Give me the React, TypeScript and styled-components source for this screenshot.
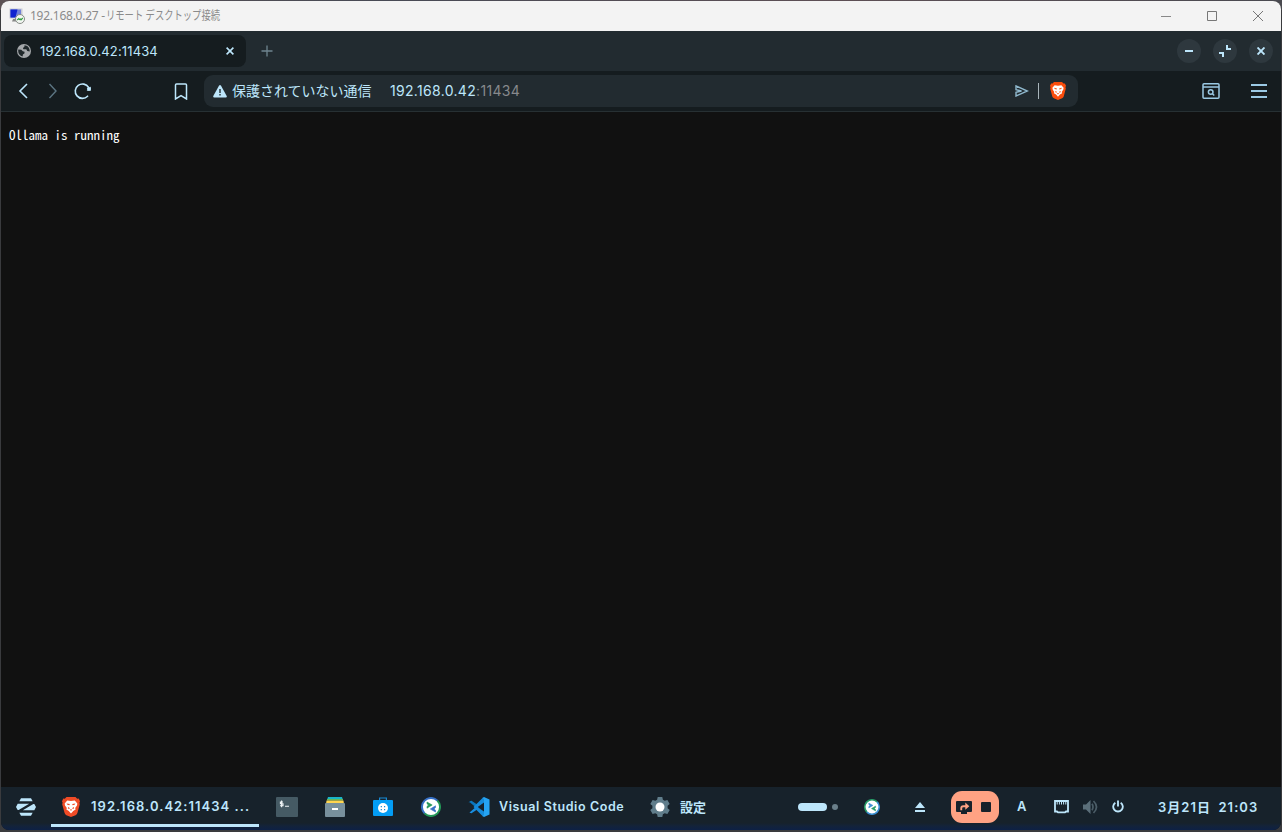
import React from "react";
import styled, { createGlobalStyle } from "styled-components";

const Global = createGlobalStyle`
  * { box-sizing: border-box; }
  html, body { margin: 0; background: #3a3b3e; }
  svg { display: block; flex: none; }
`;

const ACCENT = "#bde6fb";

const Desktop = styled.div`
  width: 1282px;
  height: 832px;
  padding: 1px 1px 2px;
  overflow: hidden;
  background: linear-gradient(90deg, #5c5254, #474a55 30%, #5d4f55 65%, #4a4a50);
  background-color: #3a3b3e;
  background-size: 100% 10px;
  background-repeat: no-repeat;
  font-family: Inter, "Noto Sans CJK JP", sans-serif;
`;

const RemoteWindow = styled.div`
  display: flex;
  flex-direction: column;
  height: 829px;
  border-radius: 8px;
  overflow: hidden;
  background: #111;
`;

const TitleBar = styled.header`
  display: flex;
  align-items: center;
  height: 30px;
  flex: none;
  padding-left: 8px;
  background: #f3f3f3;
`;

const Label = styled.span<{ $size: number; $color?: string; $ml?: number; $w?: number; $ls?: number; $width?: number }>`
  flex: none;
  white-space: pre;
  font-size: ${(p) => p.$size}px;
  line-height: 20px;
  color: ${(p) => p.$color ?? ACCENT};
  margin-left: ${(p) => p.$ml ?? 0}px;
  font-weight: ${(p) => p.$w ?? 400};
  letter-spacing: ${(p) => p.$ls ?? 0}px;
  width: ${(p) => (p.$width ? `${p.$width}px` : "auto")};
`;

const WindowTitle = styled(Label)`
  font-family: "Noto Sans", "Noto Sans CJK JP", sans-serif;
`;

const TaskLabel = styled(Label)`
  margin-top: -1px;
`;

const Clock = styled(Label)`
  word-spacing: 3px;
`;

const Kana = styled.span`
  display: inline-block;
  transform: scaleX(0.775);
  transform-origin: 0 50%;
`;

const Spacer = styled.div`
  flex: 1;
`;

const CaptionButton = styled.div`
  display: grid;
  place-items: center;
  width: 46px;
  height: 28px;
`;

const TabStrip = styled.div`
  display: flex;
  align-items: center;
  height: 40px;
  flex: none;
  padding: 0 8px 0 3px;
  background: #222b30;
`;

const Tab = styled.div`
  display: flex;
  align-items: center;
  width: 242px;
  height: 32px;
  padding: 0 12px 0 13px;
  border-radius: 8px;
  background: #151c1f;
`;

const NewTab = styled.div`
  margin-left: 15px;
`;

const RoundButton = styled.div`
  display: grid;
  place-items: center;
  width: 24px;
  height: 24px;
  margin-left: 12px;
  border-radius: 50%;
  background: #2e383e;
`;

const Toolbar = styled.div`
  display: flex;
  align-items: center;
  height: 41px;
  flex: none;
  padding-left: 14px;
  border-bottom: 1px solid #273033;
  background: #151c1f;
`;

const ToolIcon = styled.div<{ $ml?: number }>`
  margin-left: ${(p) => p.$ml ?? 0}px;
`;

const AddressBar = styled.div`
  display: flex;
  align-items: center;
  width: 874px;
  height: 32px;
  margin-left: 16px;
  padding: 0 12px 0 9px;
  border-radius: 9px;
  background: #222b30;
`;

const Divider = styled.div`
  width: 1px;
  height: 16px;
  margin: 0 11px 0 9px;
  background: #a9b5bb;
`;

const Page = styled.main`
  flex: 1;
  padding: 13px 8px;
  background: #111;
`;

const PageText = styled.pre`
  margin: 0;
  font: 13px/20px "Noto Sans Mono CJK JP", "DejaVu Sans Mono", monospace;
  color: #fff;
`;

const Taskbar = styled.footer`
  display: flex;
  align-items: stretch;
  height: 43px;
  flex: none;
  padding-bottom: 3px;
  background: linear-gradient(180deg, #17222b 0 36px, #13233a 39px, #0d2145 43px);
`;

const Slot = styled.div<{ $ml?: number; $w: number; $active?: boolean }>`
  display: flex;
  align-items: center;
  flex: none;
  width: ${(p) => p.$w}px;
  height: 40px;
  margin-left: ${(p) => p.$ml ?? 0}px;
  border-bottom: 3px solid ${(p) => (p.$active ? ACCENT : "transparent")};
  padding-top: 2px;
`;

const Workspace = styled.div<{ $w: number; $h: number; $on?: boolean }>`
  width: ${(p) => p.$w}px;
  height: ${(p) => p.$h}px;
  margin-right: 5px;
  border-radius: 4px;
  background: ${(p) => (p.$on ? ACCENT : "#6a7f8a")};
`;

const Recorder = styled.div`
  display: flex;
  align-items: center;
  flex: none;
  gap: 9px;
  width: 48px;
  height: 32px;
  margin: 4px 0 0 24px;
  padding-left: 5px;
  border-radius: 11px;
  background: #ffa283;
`;

const StopSquare = styled.div`
  width: 10px;
  height: 10px;
  border-radius: 1px;
  background: #17222b;
`;

const RemoteIcon = () => (
  <svg width="16" height="16" viewBox="0 0 16 16">
    <path d="M.5.5h13v10H.5z" fill="#c9cbd6" />
    <path d="M1.5 1.5h10.5v8H1.5z" fill="#6f80d8" />
    <path d="M1.5 1.5h7l-2 8h-5z" fill="#1024d0" />
    <path d="M4 11h5v2.5H3z" fill="#888" />
    <circle cx="11" cy="11" r="4.5" fill="#f3f6f2" stroke="#858b85" />
    <path d="M8.3 12l1.5-1.5 1 1.5M11 10.5l1 1.3L13.7 10" fill="none" stroke="#299a38" strokeWidth="1.1" />
  </svg>
);

const Globe = () => (
  <svg width="14" height="14" viewBox="0 0 14 14">
    <circle cx="7" cy="7" r="7" fill="#a4a7aa" />
    <path d="M1.3 5.5l3 .2 1.5 1.5 1.8.5-.2 1.8-1.5 1L5.6 12.6C3 12 1.2 9.7 1.2 7zM7.5 1.3l-.2 1.8-1.5 1 .7 1.2 2.8-.1 1 1.7 2.4.5C12.9 4 10.5 1.5 7.5 1.3z" fill="#20282b" />
  </svg>
);

const Stroke = ({ w, h, d, color = ACCENT, sw = 1.6 }: { w: number; h: number; d: string; color?: string; sw?: number }) => (
  <svg width={w} height={h} viewBox={`0 0 ${w} ${h}`} fill="none" stroke={color} strokeWidth={sw}>
    <path d={d} />
  </svg>
);

const Reload = () => (
  <svg width="18" height="18" viewBox="0 0 18 18" fill="none">
    <path d="M13.6 14.2A7.2 7.2 0 1 1 14.6 5.4" stroke={ACCENT} strokeWidth="1.6" strokeLinecap="round" />
    <path d="M16.8 4.6v4.2h-4.2z" fill={ACCENT} />
    <circle cx="14.9" cy="6.8" r="1.9" fill={ACCENT} />
  </svg>
);

const Warning = () => (
  <svg width="14" height="13" viewBox="0 0 14 13">
    <path d="M6.1.6Q7-.5 7.9.6l5.8 10.3q.6 1.5-1 1.6H1.3q-1.6-.1-1-1.6z" fill={ACCENT} />
    <path d="M6.3 4h1.4v4H6.3zM6.3 9h1.4v1.5H6.3z" fill="#222b30" />
  </svg>
);

const Brave = ({ w, h, color }: { w: number; h: number; color: string }) => (
  <svg width={w} height={h} viewBox="0 0 18 20">
    <path d="M4.5 0h9l1.7 1.7 1.5-.2L18 4.2l-.6 1.6.4 1.4-2.4 8.9q-.4 1.3-1.8 2.1L9 20l-4.6-1.8q-1.4-.8-1.8-2.1L.2 7.2l.4-1.4L0 4.2l1.3-2.7 1.5.2z" fill={color} />
    <path d="M5.2 3.4L9 4l3.8-.6 2.5 3-.3 2-1.8 2.6.4 1.6-2.4 1.3L9 16.4l-2.2-2.5-2.4-1.3.4-1.6L3 8.4l-.3-2z" fill="#fff" />
    <path d="M4.6 6.4l3.2.7-.4 1.2-2-.6zM13.4 6.4l-3.2.7.4 1.2 2-.6zM6.4 10l1.5 1.2L7 12l-1.2-.8zM11.6 10l-1.5 1.2L11 12l1.2-.8zM7.8 12.8L9 12.2l1.2.6L9 13.8z" fill={color} />
  </svg>
);

const SearchPanel = () => (
  <svg width="18" height="16" viewBox="0 0 18 16" fill="none" stroke="#9bc9e4" strokeWidth="1.5">
    <rect x="1" y=".8" width="16" height="14.4" rx="1" />
    <path d="M1 4h16" />
    <circle cx="8.7" cy="9" r="2.3" />
    <path d="M10.2 10.5l2 2" />
  </svg>
);

const Zorin = () => (
  <svg width="20" height="18" viewBox="0 1.2 24 21.6" fill={ACCENT}>
    <path d="M4 18.944L5.995 22.4h12.01L20 18.944zM24 12l-2.013 3.8H8.216L20.803 8.3h1.184zM0 12l2.013-3.8h13.771L3.197 15.7H2.013zM4 5.056L5.995 1.6h12.01L20 5.056z" />
  </svg>
);

const Terminal = () => (
  <svg width="22" height="20" viewBox="0 0 22 20">
    <rect width="22" height="20" rx="1" fill="#455a64" />
    <path d="M7 5H4.4v1.8H7v2H4M5.6 3.5v6.7M9 9.3h4" fill="none" stroke="#f0f5f7" strokeWidth="1.1" />
  </svg>
);

const Files = () => (
  <svg width="20" height="20" viewBox="0 0 20 20">
    <path d="M3 0h14l1 3H2z" fill="#19b5c9" />
    <path d="M2 2h16v1.5H2z" fill="#64b95a" />
    <path d="M1.5 3.5h17L19 7H1z" fill="#ffd54f" />
    <rect y="6" width="20" height="14" rx="1" fill="#78909c" />
    <rect x="7" y="11" width="6" height="2" fill="#fff" />
  </svg>
);

const Software = () => (
  <svg width="20" height="20" viewBox="0 0 20 20">
    <path d="M6.6 4V1h6.8v3" fill="none" stroke="#168ad6" strokeWidth="1.2" />
    <rect y="3" width="20" height="16" rx="1" fill="#039df5" />
    <circle cx="10" cy="11" r="5" fill="#fff" />
    <path d="M7.7 9h1.2v1.2H7.7zM11 9h1.2v1.2H11zM7.7 12h1.2v1.2H7.7zM11 12h1.2v1.2H11z" fill="#168ad6" />
  </svg>
);

const Sync = ({ size, left, right, top, bottom }: { size: number; left: string; right: string; top: string; bottom: string }) => (
  <svg width={size} height={size} viewBox="0 0 20 20">
    <circle cx="10" cy="10" r="9" fill="#fff" />
    <path d="M3.6 16.4A9 9 0 0 1 16.4 3.6" fill="none" stroke={left} strokeWidth="2" />
    <path d="M16.4 3.6A9 9 0 0 1 3.6 16.4" fill="none" stroke={right} strokeWidth="2" />
    <path d="M6 5l5.2 3L6 11.2V9.4L7.5 8 6 6.8z" fill={top} stroke={top} strokeWidth=".6" />
    <path d="M14.5 8.8L9.3 12l5.2 3v-1.8L13 12l1.5-1.4z" fill={bottom} stroke={bottom} strokeWidth=".6" />
  </svg>
);

const Code = () => (
  <svg width="22" height="20" viewBox="0 0 22 20">
    <path d="M1.8 5.2L16 17.5V12L3.5 3.8Q2.4 3.4.5 5.6z" fill="#0b76bd" />
    <path d="M1.5 15.4L16 3v5L3.5 16.3Q2 16.4.3 14.6z" fill="#198ee0" />
    <path d="M16 0l5.5 2.6v14.8L16 20l-1.3-.8L16 14.6V5.4L14.7.8z" fill="#25a3f2" />
    <path d="M15 .4l1 5L8 10l8 4.6-1 5L5.5 10z" fill="#158bdb" />
    <path d="M16 5.4v9.2L9.7 10z" fill="#17222b" />
  </svg>
);

const Gear = () => (
  <svg width="20" height="20" viewBox="0 0 20 20">
    <path d="M7.7 0h4.6l.6 2.8 1.8 1 2.7-.9 2.3 4-2.1 1.9v2.4l2.1 1.9-2.3 4-2.7-.9-1.8 1-.6 2.8H7.7l-.6-2.8-1.8-1-2.7.9-2.3-4 2.1-1.9V8.8L.3 6.9l2.3-4 2.7.9 1.8-1z" fill="#607d8b" />
    <circle cx="10" cy="10" r="4.5" fill="#fff" />
  </svg>
);

const Eject = () => (
  <svg width="10" height="10" viewBox="0 0 10 10" fill={ACCENT}>
    <path d="M5 0l5 6H0zM0 8h10v2H0z" />
  </svg>
);

const ShareScreen = () => (
  <svg width="16" height="15" viewBox="0 0 16 15">
    <path d="M1 1h14q1 0 1 1v9q0 1-1 1h-4v2H5v-2H1q-1 0-1-1V2q0-1 1-1z" fill="#17222b" />
    <path d="M4.3 10.2V8.3q0-3 3-3h2V2.6L13.3 6.3 9.3 9.8V7.2H7.2q-1 0-1 1v2z" fill="#ffa283" />
  </svg>
);

const Ethernet = () => (
  <svg width="15" height="14" viewBox="0 0 15 14">
    <path d="M1 1h13v10.5h-2L11 12.4H4l-1-.9H1z" fill="none" stroke={ACCENT} strokeWidth="1.8" />
    <path d="M3.2 1v3.5M5.4 1v3.5M7.5 1v3.5M9.6 1v3.5M11.8 1v3.5" stroke={ACCENT} strokeWidth="1" />
  </svg>
);

const Volume = () => (
  <svg width="15" height="14" viewBox="0 0 15 14">
    <path d="M0 4.5h3L7.5 0v14L3 9.5H0z" fill="#5b6f7a" />
    <path d="M9 3.8q2 3.2 0 6.4M10.5 1q6 6 0 12" fill="none" stroke="#4b5d67" strokeWidth="1.7" />
  </svg>
);

const Power = () => (
  <svg width="12" height="13" viewBox="0 0 13 13" fill="none" stroke={ACCENT} strokeWidth="2">
    <path d="M3.6 2.4a5.2 5.2 0 1 0 5.8 0M6.5 0v6.5" />
  </svg>
);

export default function App() {
  return (
    <Desktop>
      <Global />
      <RemoteWindow>
        <TitleBar>
          <RemoteIcon />
          <WindowTitle $size={12} $color="#8b8b8b" $ml={5} $ls={-0.25} $width={76}>192.168.0.27 - </WindowTitle>
          <WindowTitle $size={12} $color="#8b8b8b">
            <Kana>リモート デスクトップ接続</Kana>
          </WindowTitle>
          <Spacer />
          <CaptionButton><Stroke w={10} h={10} d="M0 5.5h10" color="#888" sw={1} /></CaptionButton>
          <CaptionButton><Stroke w={10} h={10} d="M.5.5h9v9h-9z" color="#777" sw={1} /></CaptionButton>
          <CaptionButton><Stroke w={10} h={10} d="M0 0l10 10M10 0L0 10" color="#777" sw={1} /></CaptionButton>
        </TitleBar>

        <TabStrip>
          <Tab>
            <Globe />
            <Label $size={13} $ml={9} $ls={0.13}>192.168.0.42:11434</Label>
            <Spacer />
            <Stroke w={8} h={8} d="M.6.6l6.8 6.8M7.4.6L.6 7.4" />
          </Tab>
          <NewTab><Stroke w={12} h={12} d="M6 .5v11M.5 6h11" color="#6f858f" sw={1.3} /></NewTab>
          <Spacer />
          <RoundButton><Stroke w={8} h={8} d="M0 4h8" sw={2} /></RoundButton>
          <RoundButton><Stroke w={12} h={12} d="M0 8h4v4M8 0v4h4" sw={2} /></RoundButton>
          <RoundButton><Stroke w={8} h={8} d="M.5.5l7 7M7.5.5l-7 7" sw={1.9} /></RoundButton>
        </TabStrip>

        <Toolbar>
          <ToolIcon $ml={3}><Stroke w={10} h={16} d="M9 1L2 8l7 7" sw={1.6} /></ToolIcon>
          <ToolIcon $ml={20}><Stroke w={10} h={16} d="M1.5 1L8 8l-6.5 7" color="#5b7481" sw={1.4} /></ToolIcon>
          <ToolIcon $ml={16}><Reload /></ToolIcon>
          <ToolIcon $ml={82}><Stroke w={14} h={17} d="M2.5 1h9q1 0 1 1v14L7 12.6 1.5 16V2q0-1 1-1z" sw={1.5} /></ToolIcon>
          <AddressBar>
            <Warning />
            <Label $size={14} $ml={5} $width={158}>保護されていない通信</Label>
            <Label $size={14} $ls={0.32}>192.168.0.42</Label>
            <Label $size={14} $ls={0.32} $color="#87898c">:11434</Label>
            <Spacer />
            <Stroke w={14} h={12} d="M1 1l11.5 5L1 11V7.2L6.5 6 1 4.8z" color="#8fb8cd" sw={1.4} />
            <Divider />
            <Brave w={16} h={18} color="#fb4d0c" />
          </AddressBar>
          <Spacer />
          <SearchPanel />
          <ToolIcon $ml={30}><Stroke w={31} h={14} d="M1 1h16M1 7h16M1 13h16" color="#9bc9e4" sw={1.8} /></ToolIcon>
        </Toolbar>

        <Page>
          <PageText>Ollama is running</PageText>
        </Page>

        <Taskbar>
          <Slot $ml={15} $w={35}><Zorin /></Slot>
          <Slot $w={208} $active>
            <ToolIcon $ml={11}><Brave w={18} h={20} color="#ef4b26" /></ToolIcon>
            <TaskLabel $size={13} $ml={11} $w={600} $ls={1.05}>192.168.0.42:11434 ...</TaskLabel>
          </Slot>
          <Slot $ml={17} $w={48}><Terminal /></Slot>
          <Slot $ml={1} $w={48}><Files /></Slot>
          <Slot $w={48}><Software /></Slot>
          <Slot $w={47}><Sync size={20} left="#356fc4" right="#239657" top="#239657" bottom="#356fc4" /></Slot>
          <Slot $w={182}>
            <Code />
            <Label $size={12.5} $ml={9} $w={600} $ls={0.6}>Visual Studio Code</Label>
          </Slot>
          <Slot $w={148}>
            <Gear />
            <Label $size={13} $ml={10} $w={600}>設定</Label>
          </Slot>
          <Slot $w={66}>
            <Workspace $w={29} $h={8} $on />
            <Workspace $w={6} $h={6} />
          </Slot>
          <Slot $w={51}><Sync size={16} left="#269b67" right="#398fd3" top="#398fd3" bottom="#269b67" /></Slot>
          <Slot $w={12}><Eject /></Slot>
          <Recorder><ShareScreen /><StopSquare /></Recorder>
          <Slot $ml={18} $w={37}><TaskLabel $size={13} $w={600}>A</TaskLabel></Slot>
          <Slot $w={29}><Ethernet /></Slot>
          <Slot $w={29}><Volume /></Slot>
          <Slot $w={46}><Power /></Slot>
          <Slot as="time" $w={110}><Clock $size={13} $w={600} $ls={1.05}>3月21日 21:03</Clock></Slot>
        </Taskbar>
      </RemoteWindow>
    </Desktop>
  );
}
